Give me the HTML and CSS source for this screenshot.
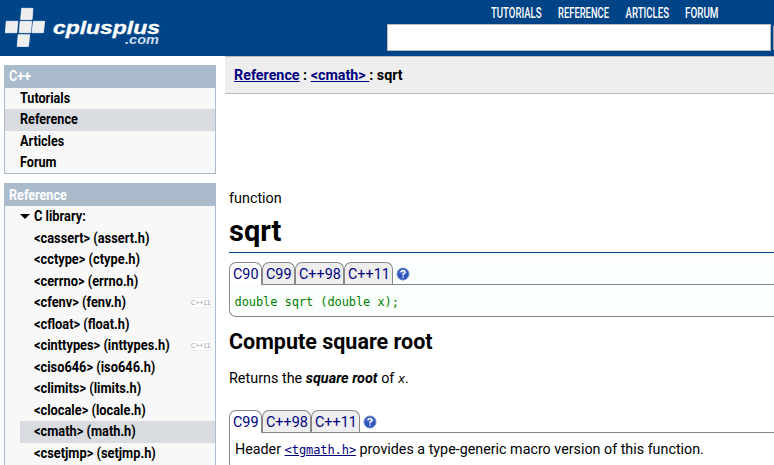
FILE: index.html
```html
<!DOCTYPE html>
<html lang="en">
<head>
<meta charset="utf-8">
<title>sqrt - C++ Reference</title>
<link rel="stylesheet" href="styles.css">
</head>
<body>
<header class="top">
  <svg class="logo" width="170" height="56" viewBox="0 0 170 56" role="img" aria-label="cplusplus.com">
    <g fill="#eee" stroke="#fff" stroke-width=".7">
      <path d="M21.700 8.300h11.200l-.8 11.200H20.600z"/>
      <path d="M6.300 21.300h11.500l-1 11.400H5.300z"/>
      <path d="M20.200 21.300h11.500l-1 11.400H19.200z"/>
      <path d="M33.300 21.300h11.400l-1.300 11.400H32z"/>
      <path d="M18.200 34.700h11.500l-1.200 11.700H17.200z"/>
    </g>
    <text class="brand" x="53" y="33.500" textLength="107" lengthAdjust="spacingAndGlyphs">cplusplus</text>
    <text class="domain" x="125" y="44" textLength="34" lengthAdjust="spacingAndGlyphs">.com</text>
  </svg>
  <div class="tools">
    <nav class="nav">
      <svg width="260" height="24">
        <text x="0" y="18" textLength="50.500" lengthAdjust="spacingAndGlyphs">TUTORIALS</text>
        <text x="67" y="18" textLength="51" lengthAdjust="spacingAndGlyphs">REFERENCE</text>
        <text x="134.500" y="18" textLength="43.500" lengthAdjust="spacingAndGlyphs">ARTICLES</text>
        <text x="194" y="18" textLength="33.500" lengthAdjust="spacingAndGlyphs">FORUM</text>
      </svg>
    </nav>
    <div class="searchrow"><input class="search" type="text" aria-label="Search"><span class="go"></span></div>
  </div>
</header>
<div class="page">
  <aside class="side">
    <section class="box menu">
      <h3><span>C++</span></h3>
      <ul>
        <li><span>Tutorials</span></li>
        <li class="on"><span>Reference</span></li>
        <li><span>Articles</span></li>
        <li><span>Forum</span></li>
      </ul>
    </section>
    <section class="box library">
      <h3><span>Reference</span></h3>
      <ul class="tree">
        <li class="root"><i class="arrow"></i><span>C library:</span></li>
        <li><span>&lt;cassert&gt; (assert.h)</span></li>
        <li><span>&lt;cctype&gt; (ctype.h)</span></li>
        <li><span>&lt;cerrno&gt; (errno.h)</span></li>
        <li><span>&lt;cfenv&gt; (fenv.h)</span><b class="tag">C++11</b></li>
        <li><span>&lt;cfloat&gt; (float.h)</span></li>
        <li><span>&lt;cinttypes&gt; (inttypes.h)</span><b class="tag">C++11</b></li>
        <li><span>&lt;ciso646&gt; (iso646.h)</span></li>
        <li><span>&lt;climits&gt; (limits.h)</span></li>
        <li><span>&lt;clocale&gt; (locale.h)</span></li>
        <li class="on"><span>&lt;cmath&gt; (math.h)</span></li>
        <li><span>&lt;csetjmp&gt; (setjmp.h)</span></li>
      </ul>
    </section>
  </aside>
  <main class="main">
    <div class="crumbs"><a href="#">Reference</a> : <a href="#">&lt;cmath&gt; </a>: sqrt</div>
    <article class="doc">
      <div class="kind">function</div>
      <h1>sqrt</h1>
      <div class="tabs first">
        <span class="tab sel">C90</span><span class="tab">C99</span><span class="tab wide">C++98</span><span class="tab wide">C++11</span>
        <svg class="help" width="14" height="14" viewBox="0 0 14 14"><circle cx="7" cy="7" r="6" fill="#2f55bd" stroke="#718fcb"/><path d="M2.500 5.500a5 4.500 0 0 1 9 0Q7 8 2.500 5.500" fill="#5c80d8"/><path d="M5 5.200Q5.200 3.500 7 3.500t2 1.700Q9 6.300 7.100 7.400v1M7.100 9.500v1.300" fill="none" stroke="#fff" stroke-width="1.500"/></svg>
      </div>
      <div class="panel green"><code>double sqrt (double x);</code></div>
      <h2>Compute square root</h2>
      <p>Returns the <strong>square root</strong> of <code class="var">x</code>.</p>
      <div class="tabs second">
        <span class="tab sel">C99</span><span class="tab wide">C++98</span><span class="tab wide">C++11</span>
        <svg class="help" width="14" height="14" viewBox="0 0 14 14"><circle cx="7" cy="7" r="6" fill="#2f55bd" stroke="#718fcb"/><path d="M2.500 5.500a5 4.500 0 0 1 9 0Q7 8 2.500 5.500" fill="#5c80d8"/><path d="M5 5.200Q5.200 3.500 7 3.500t2 1.700Q9 6.300 7.100 7.400v1M7.100 9.500v1.300" fill="none" stroke="#fff" stroke-width="1.500"/></svg>
      </div>
      <div class="panel note">Header <a href="#"><code>&lt;tgmath.h&gt;</code></a> provides a type-generic macro version of this function.</div>
    </article>
  </main>
</div>
</body>
</html>
```

FILE: styles.css
```css
* { box-sizing: border-box; }
html, body { margin: 0; height: 465px; overflow: hidden; }
body { background: #fff; color: #000; font: 14.4px/21px Roboto, sans-serif; }
a { color: #000080; }
ul { list-style: none; margin: 0; padding: 0; }

.top { height: 56px; background: #048; display: flex; justify-content: space-between; }
.logo { flex: none; }
.brand { font: italic bold 19px "Liberation Sans", sans-serif; fill: #fff; stroke: #fff; stroke-width: .3px; }
.domain { font: italic bold 12px "Liberation Sans", sans-serif; fill: #cde; }
.tools { width: 387px; flex: none; }
.nav { height: 24px; padding-left: 104px; }
.nav svg { display: block; }
.nav text { font: 500 14px Roboto, sans-serif; fill: #fff; }
.searchrow { display: flex; gap: 2px; }
.search { width: 384px; height: 27px; border: 1px solid #bbb; background: #fff; padding: 0; flex: none; }
.go { width: 10px; height: 24px; margin-top: 2px; flex: none; border: 1px solid #aaa; background: #048; }

.page { display: flex; height: 409px; }
.side { width: 216px; flex: none; padding: 9px 0 0 4px; margin-right: 9px; display: flex; flex-direction: column; }
.box { border: 1px solid #abc; background: #f8f8f8; margin-bottom: 9px; flex: none; }
.menu { height: 109px; }
.library { flex: 1; border-bottom: 0; margin-bottom: 0; }
.box h3 { margin: 0; height: 21.5px; background: #abc; color: #fff; padding-left: 4px; font-size: 14px; line-height: 21px; }
.library h3 { height: 22px; line-height: 23px; }
.box li { display: flex; align-items: center; height: 21.5px; padding-left: 15px; font-size: 14px; font-weight: bold; white-space: nowrap; }
.box span { display: inline-block; transform: scaleX(.9); transform-origin: 0 50%; }
.box .tree span { transform: scaleX(.915); }
.box .on { background: #d8dbe0; }
.tree { padding-left: 15px; }
.box .tree li { padding-left: 14px; }
.box .tree .root { padding-left: 0; }
.arrow { width: 10px; border: 5px solid transparent; border-top-color: #000; border-bottom: 0; margin-right: 4px; }
.tag { margin-left: auto; margin-right: 5px; width: 20px; height: 11px; border: 1px solid #eee; border-radius: 2px; background: #fff; color: #999; font: 6.5px/9px "Liberation Sans", sans-serif; text-align: center; }

.main { flex: 1; min-width: 0; }
.crumbs { height: 38px; background: #eee; border: solid #bbb; border-width: 1px 0; padding: 8px 9px; font-size: 14.3px; font-weight: bold; line-height: 21px; }
.doc { padding: 94px 0 0 4px; white-space: nowrap; }
.kind { height: 21px; }
h1 { margin: 0; height: 44px; border-bottom: 1px solid #048; font-size: 29px; line-height: 45px; }
.tabs { display: flex; height: 22px; position: relative; z-index: 1; }
.first { margin-top: 9px; background: linear-gradient(90deg, #fff, #fbfffb 170px); }
.tab { width: 33px; height: 22px; padding-left: 3px; border: 1px solid #888; border-bottom: 0; border-radius: 7px 7px 0 0; background: #eee; color: #000080; line-height: 23px; }
.wide { width: 49px; }
.sel { background: #fff; height: 23px; }
.help { margin: 5px 0 0 3px; }
.panel { border: 1px solid #888; border-right: 0; border-radius: 0 0 0 7px; padding-left: 5px; font-size: 14.3px; }
.green { height: 33px; line-height: 32px; background: #fbfffb; color: #008000; }
code { font: 12px "DejaVu Sans Mono", monospace; letter-spacing: -.08px; }
.green code { margin-left: -.5px; }
h2 { margin: 12px 0 0; font-size: 21.5px; line-height: 26px; }
p { margin: 13px 0 0; height: 21px; }
strong { font-style: italic; }
.var { font-style: italic; }
.second { margin-top: 21px; }
.note { height: 38px; line-height: 33px; }
```
